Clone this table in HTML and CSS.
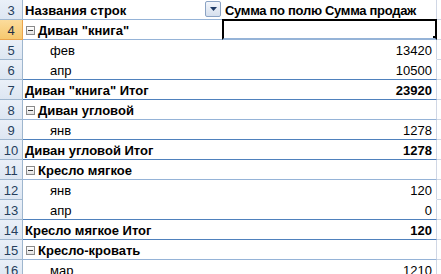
FILE: index.html
```html
<!DOCTYPE html>
<html lang="ru">
<head>
    <meta charset="UTF-8">
    <title>Сводная таблица</title>
    <link rel="stylesheet" href="styles.css">
</head>
<body>
    <div class="sheet">
        <div class="row line-light">
            <div class="rh">3</div>
            <div class="cell a head">Названия строк<span class="dd"><svg width="7" height="4" viewBox="0 0 7 4"><path d="M0 0h7L3.5 4z" fill="#1f3b66"/></svg></span></div>
            <div class="cell b head head-sum">Сумма по полю Сумма продаж</div>
            <div class="cell c"></div>
        </div>
        <div class="row line-light">
            <div class="rh active">4</div>
            <div class="cell a cat"><span class="toggle"></span>Диван "книга"</div>
            <div class="cell b selected"></div>
            <div class="cell c"></div>
        </div>
        <div class="row line-none">
            <div class="rh">5</div>
            <div class="cell a item">фев</div>
            <div class="cell b num">13420</div>
            <div class="cell c"></div>
        </div>
        <div class="row line-dark">
            <div class="rh">6</div>
            <div class="cell a item">апр</div>
            <div class="cell b num">10500</div>
            <div class="cell c"></div>
        </div>
        <div class="row line-dark">
            <div class="rh">7</div>
            <div class="cell a total">Диван "книга" Итог</div>
            <div class="cell b num total">23920</div>
            <div class="cell c"></div>
        </div>
        <div class="row line-light">
            <div class="rh">8</div>
            <div class="cell a cat"><span class="toggle"></span>Диван угловой</div>
            <div class="cell b"></div>
            <div class="cell c"></div>
        </div>
        <div class="row line-dark">
            <div class="rh">9</div>
            <div class="cell a item">янв</div>
            <div class="cell b num">1278</div>
            <div class="cell c"></div>
        </div>
        <div class="row line-dark">
            <div class="rh">10</div>
            <div class="cell a total">Диван угловой Итог</div>
            <div class="cell b num total">1278</div>
            <div class="cell c"></div>
        </div>
        <div class="row line-light">
            <div class="rh">11</div>
            <div class="cell a cat"><span class="toggle"></span>Кресло мягкое</div>
            <div class="cell b"></div>
            <div class="cell c"></div>
        </div>
        <div class="row line-none">
            <div class="rh">12</div>
            <div class="cell a item">янв</div>
            <div class="cell b num">120</div>
            <div class="cell c"></div>
        </div>
        <div class="row line-dark">
            <div class="rh">13</div>
            <div class="cell a item">апр</div>
            <div class="cell b num">0</div>
            <div class="cell c"></div>
        </div>
        <div class="row line-dark">
            <div class="rh">14</div>
            <div class="cell a total">Кресло мягкое Итог</div>
            <div class="cell b num total">120</div>
            <div class="cell c"></div>
        </div>
        <div class="row line-light">
            <div class="rh">15</div>
            <div class="cell a cat"><span class="toggle"></span>Кресло-кровать</div>
            <div class="cell b"></div>
            <div class="cell c"></div>
        </div>
        <div class="row line-none">
            <div class="rh">16</div>
            <div class="cell a item">мар</div>
            <div class="cell b num">1210</div>
            <div class="cell c"></div>
        </div>
    </div>
</body>
</html>
```

FILE: styles.css
```css
body {
    margin: 0;
    overflow: hidden;
    background-color: white;
    font-family: "Liberation Sans", Arial, sans-serif;
    font-size: 13px;
    color: #000;
}
.sheet {
    display: flex;
    flex-direction: column;
}
.row {
    display: flex;
    height: 20px;
}
.rh {
    width: 23px;
    flex: none;
    box-sizing: border-box;
    border-right: 1px solid #9eb6ce;
    border-bottom: 1px solid #9eb6ce;
    background: linear-gradient(#eaf0f8, #dde6f2);
    color: #253e5c;
    text-align: center;
    line-height: 21px;
    font-size: 13px;
}
.rh.active {
    background: linear-gradient(#fbdc9c, #f6c86e);
    border-bottom-color: #e9a44c;
    border-right-color: #e9a44c;
    color: #1f2f45;
}
.cell {
    box-sizing: border-box;
    height: 20px;
    line-height: 22px;
    white-space: nowrap;
    overflow: hidden;
    border-bottom: 1px solid transparent;
}
.a {
    width: 199px;
    flex: none;
    padding-left: 2px;
    position: relative;
}
.b {
    width: 215px;
    flex: none;
    padding: 0 4px 0 3px;
    border-right: 1px solid #d0d7e5;
}
.c {
    flex: 1;
    border-bottom: 1px solid #d0d7e5;
}
.line-light .a, .line-light .b {
    border-bottom-color: #95b3d7;
}
.line-dark .a, .line-dark .b {
    border-bottom-color: #4f81bd;
}
.head, .cat, .total {
    font-weight: bold;
}
.head-sum {
    letter-spacing: -0.3px;
}
.item {
    padding-left: 27px;
}
.num {
    text-align: right;
}
/* значок свертывания группы */
.toggle {
    display: inline-block;
    width: 7px;
    height: 7px;
    margin: 0 3px 0 1px;
    border: 1px solid #8a8a8a;
    background: linear-gradient(#333, #333) 1px 3px / 5px 1px no-repeat, linear-gradient(#ffffff, #e2e2e2);
    vertical-align: 0;
}
/* кнопка фильтра в заголовке */
.dd {
    position: absolute;
    right: 1px;
    top: 1px;
    width: 14px;
    height: 14px;
    border: 1px solid #8ba3c4;
    border-radius: 2px;
    background: linear-gradient(#f3f6fb, #d5dfed);
    display: flex;
    align-items: center;
    justify-content: center;
}
/* активная ячейка */
.selected {
    position: relative;
    border: 2px solid #000;
    margin-top: -1px;
    height: 21px;
}
.selected::after {
    content: "";
    position: absolute;
    right: -4px;
    bottom: -4px;
    width: 5px;
    height: 5px;
    background: #000;
    border: 1px solid #fff;
}
```
